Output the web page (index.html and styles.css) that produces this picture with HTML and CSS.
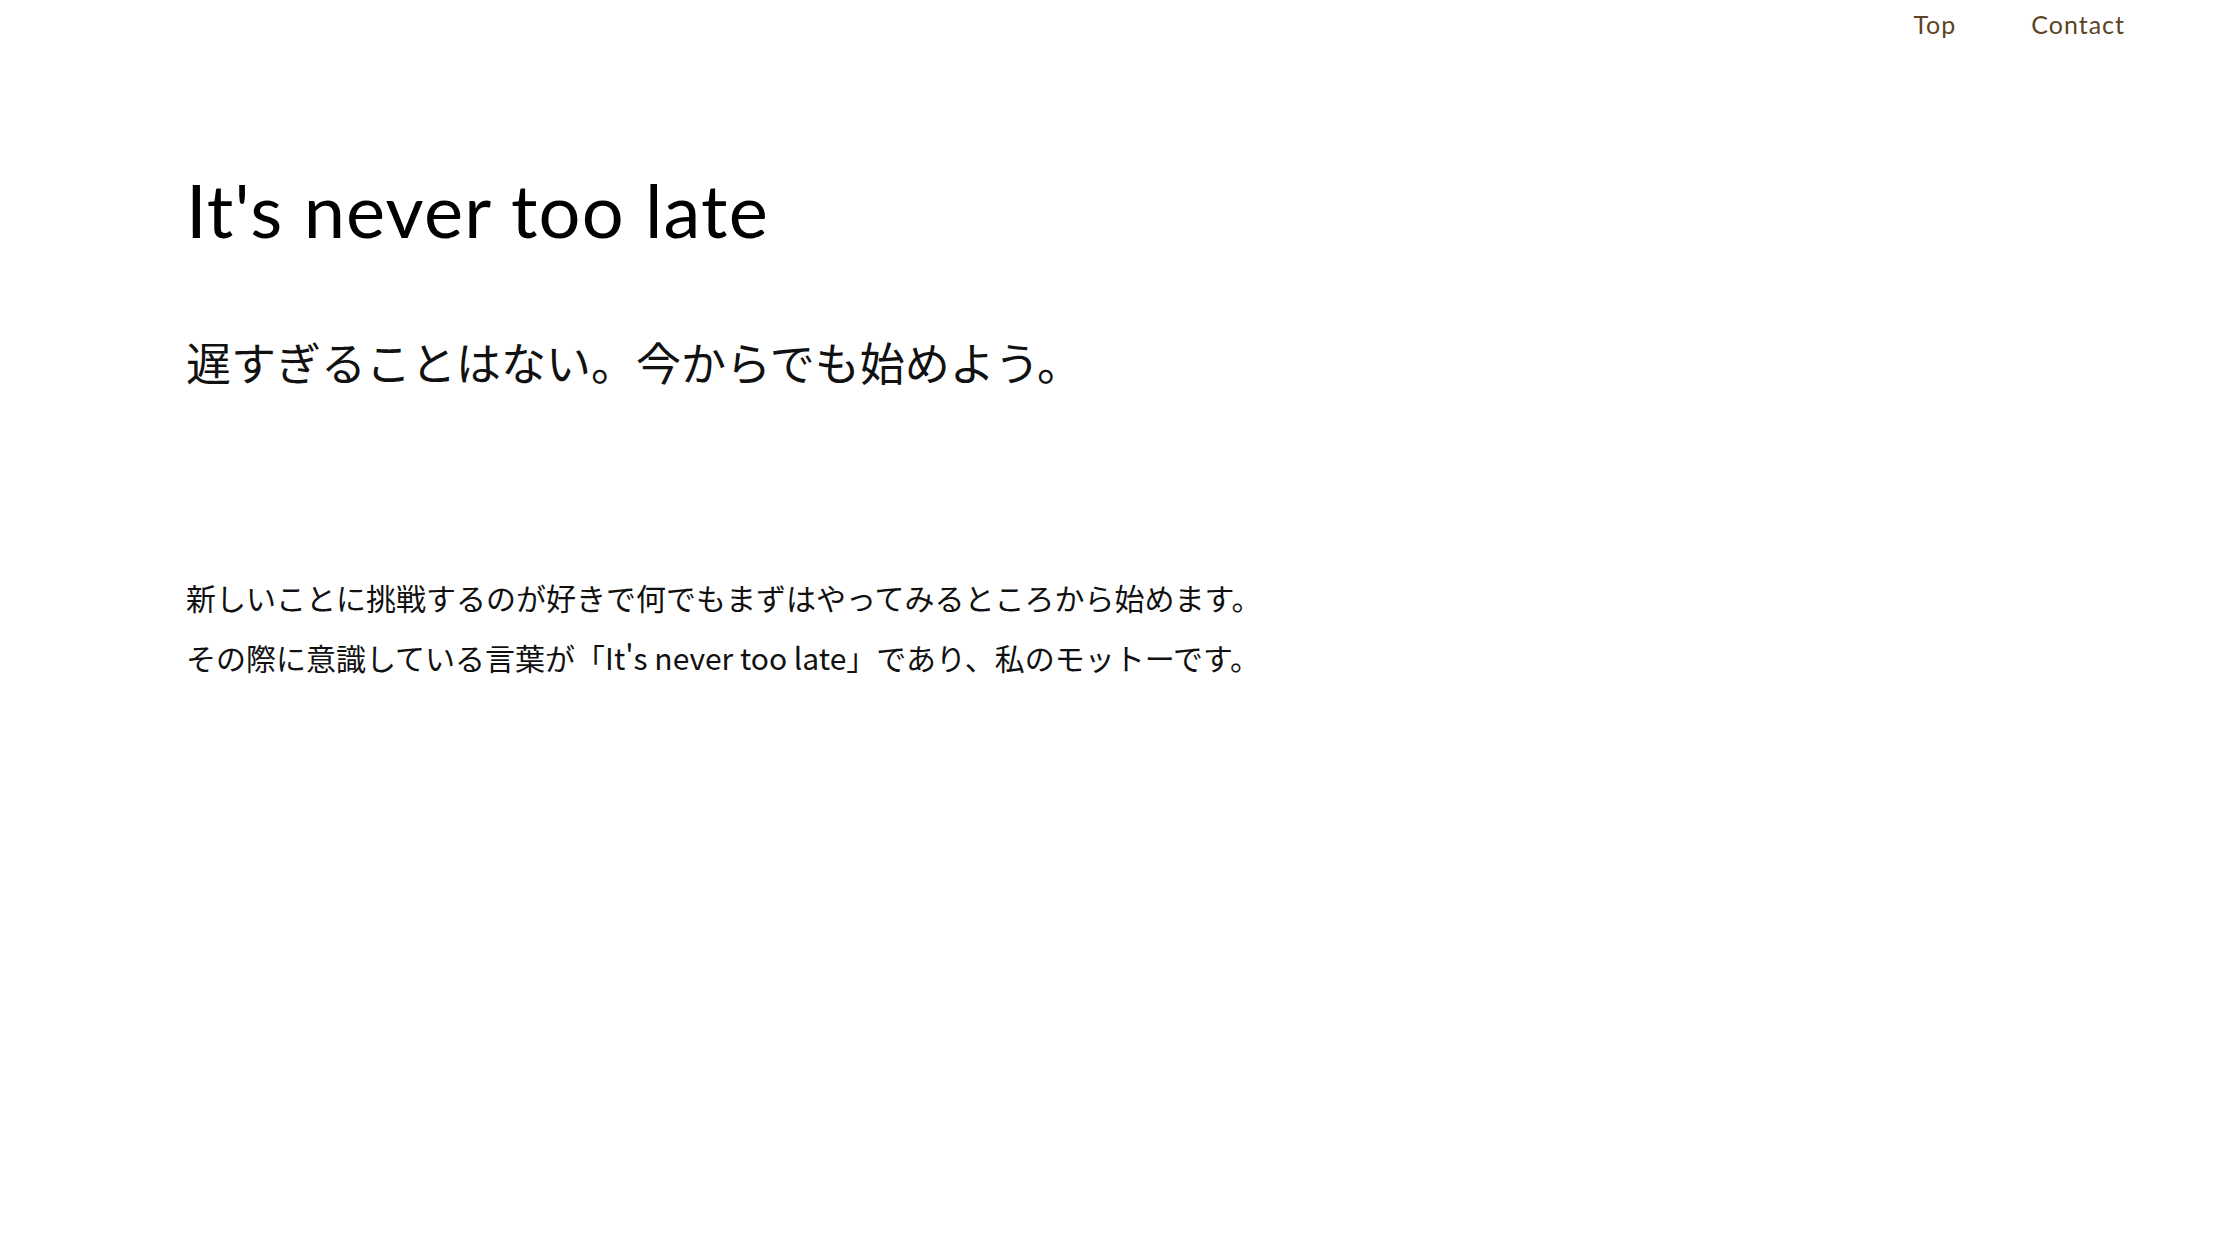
FILE: index.html
```html
<!DOCTYPE html>
<html lang="ja">
<head>
<meta charset="utf-8">
<title>It's never too late</title>
<link rel="stylesheet" href="styles.css">
</head>
<body>
<header class="site-header">
  <nav class="nav">
    <a class="nav-link" href="#">Top</a>
    <a class="nav-link" href="#">Contact</a>
  </nav>
</header>
<main class="main">
  <h1 class="title">It's never too late</h1>
  <p class="subtitle">遅すぎることはない。今からでも始めよう。</p>
  <div class="text">
    <p class="line">新しいことに挑戦するのが好きで何でもまずはやってみるところから始めます。</p>
    <p class="line">その際に意識している言葉が「It's never too late」であり、私のモットーです。</p>
  </div>
</main>
</body>
</html>
```
FILE: styles.css
```css
html, body {
  margin: 0;
  padding: 0;
  background: #ffffff;
}
body {
  font-family: "Noto Sans CJK JP", "Noto Sans", sans-serif;
  color: #111111;
}
.site-header {
  display: flex;
  justify-content: flex-end;
  padding: 12px 103px 0 0;
}
.nav {
  display: flex;
  gap: 75px;
}
.nav-link {
  font-family: "Lato", "Noto Sans", sans-serif;
  font-size: 25px;
  line-height: 1;
  letter-spacing: 1px;
  color: #5c4426;
  text-decoration: none;
}
.main {
  padding-left: 186px;
}
.title {
  margin: 136px 0 0;
  font-family: "Lato", "Noto Sans", sans-serif;
  font-weight: 400;
  font-size: 74px;
  line-height: 1;
  letter-spacing: 1.2px;
  color: #000000;
}
.subtitle {
  margin: 92px 0 0;
  font-size: 45px;
  line-height: 1;
  color: #111111;
}
.text {
  margin-top: 183px;
}
.line {
  margin: 0;
  font-size: 30px;
  line-height: 60px;
  color: #111111;
}
```
